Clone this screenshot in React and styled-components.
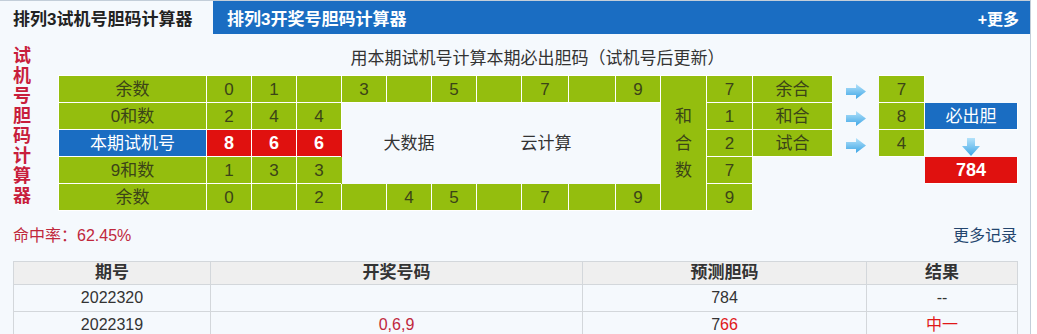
import React from "react";
import styled, { createGlobalStyle } from "styled-components";

const GlobalStyle = createGlobalStyle`
  body {
    margin: 0;
    background: #ffffff;
    font-family: "Liberation Sans", "Noto Sans CJK SC", sans-serif;
    color: #333333;
  }
`;

const Panel = styled.div`
  width: 1030px;
  height: 334px;
  overflow: hidden;
  background-color: #f5f9fd;
  border-top: 1px solid #c3ced9;
  border-right: 1px solid #c3ced9;
`;

const TabBar = styled.div`
  display: flex;
  align-items: center;
  height: 33px;
  background-color: #1a6dc2;
`;

const Tab = styled.div`
  height: 100%;
  display: flex;
  align-items: center;
  padding: 0 ${props => (props.$active ? "13px" : "14px")};
  width: ${props => (props.$active ? "187px" : "auto")};
  background-color: ${props => (props.$active ? "#f5f9fd" : "transparent")};
  color: ${props => (props.$active ? "#222222" : "#ffffff")};
  font-size: 17px;
  font-weight: 700;
`;

const MoreLink = styled.a`
  margin-left: auto;
  padding-right: 11px;
  color: #ffffff;
  font-size: 16px;
  font-weight: 700;
  text-decoration: none;
`;

const Calculator = styled.div`
  display: flex;
  padding-left: 13px;
`;

const SideLabel = styled.div`
  width: 45px;
  padding-top: 12px;
  color: #c81e3c;
  font-size: 18px;
  font-weight: 700;
  line-height: 20px;

  span {
    display: block;
  }
`;

const Main = styled.div`
  width: 959px;
`;

const Title = styled.div`
  margin: 13px 0 4px;
  line-height: 24px;
  font-size: 17px;
  text-align: center;
  color: #333333;
`;

const Grid = styled.table`
  width: 959px;
  table-layout: fixed;
  border-collapse: collapse;
  font-size: 17px;

  tr {
    height: 27px;
  }
`;

const toneColors = {
  green: "#94be0e",
  blue: "#1a6dc2",
  red: "#e0110f",
  none: "transparent"
};

const Cell = styled.td`
  padding: 0;
  border: 1px solid ${props => (props.$tone === "none" ? "transparent" : "#ffffff")};
  background-color: ${props => toneColors[props.$tone || "green"]};
  color: ${props =>
    props.$tone === "blue" || props.$tone === "red" ? "#ffffff" : "#3b4418"};
  font-weight: ${props => (props.$tone === "red" ? 700 : 400)};
  font-size: ${props => (props.$tone === "red" ? "18px" : "17px")};
  text-align: center;
  vertical-align: middle;
  line-height: 25px;
  white-space: nowrap;
`;

const PlainText = styled.span`
  color: #333333;
`;

const StackedText = styled.div`
  line-height: 27px;

  span {
    display: block;
  }
`;

const ArrowSVG = styled.svg`
  display: block;
  margin: ${props => props.$margin};
`;

const RightArrow = () => (
  <ArrowSVG $margin="5px auto 0" width="20" height="15" viewBox="0 0 20 15">
    <defs>
      <linearGradient id="arrowRight" x1="0" y1="0" x2="0" y2="1">
        <stop offset="0" stopColor="#b4e2fa" />
        <stop offset="1" stopColor="#3ea6e6" />
      </linearGradient>
    </defs>
    <path d="M0 4h10V0l10 7.5L10 15v-4H0z" fill="url(#arrowRight)" />
  </ArrowSVG>
);

const DownArrow = () => (
  <ArrowSVG $margin="8px auto 0" width="18" height="18" viewBox="0 0 18 18">
    <defs>
      <linearGradient id="arrowDown" x1="0" y1="0" x2="0" y2="1">
        <stop offset="0" stopColor="#b4e2fa" />
        <stop offset="1" stopColor="#3ea6e6" />
      </linearGradient>
    </defs>
    <path d="M5 0h8v8h5L9 18 0 8h5z" fill="url(#arrowDown)" />
  </ArrowSVG>
);

const RateBar = styled.div`
  display: flex;
  justify-content: space-between;
  margin-top: 13px;
  padding: 0 13px;
  line-height: 24px;
  font-size: 16px;
`;

const Rate = styled.span`
  color: #c0283c;
`;

const RecordsLink = styled.a`
  color: #23456e;
  text-decoration: none;
`;

const Records = styled.table`
  width: 1004px;
  margin: 13px 0 0 13px;
  table-layout: fixed;
  border-collapse: collapse;
  font-size: 16px;

  th {
    height: 22px;
    padding: 0;
    background-color: #efefef;
    border: 1px solid #d3d7db;
    font-size: 17px;
    font-weight: 700;
    color: #333333;
    line-height: 20px;
  }

  td {
    height: 26px;
    padding: 0;
    border: 1px solid #d3d7db;
    text-align: center;
    color: #333333;
    line-height: 24px;
  }
`;

const Hit = styled.span`
  color: ${props => (props.$dark ? "#c0283c" : "#e01818")};
`;

const calcWidths = [148, 45, 45, 45, 45, 45, 45, 45, 47, 47, 45, 46, 46, 80, 46, 46, 93];
const recordWidths = [197, 372, 284, 151];

const firstRow = ["0", "1", "", "3", "", "5", "", "7", "", "9"];
const lastRow = ["0", "", "2", "", "4", "5", "", "7", "", "9"];

const records = [
  { issue: "2022320", draw: "", guess: <>784</>, result: <>--</> },
  {
    issue: "2022319",
    draw: <Hit $dark>0,6,9</Hit>,
    guess: (
      <>
        7<Hit>66</Hit>
      </>
    ),
    result: <Hit>中一</Hit>
  }
];

const Stack = ({ text }) => (
  <>
    {text.split("").map((ch, i) => (
      <span key={i}>{ch}</span>
    ))}
  </>
);

export default function App() {
  return (
    <>
      <GlobalStyle />
      <Panel>
        <TabBar>
          <Tab $active>排列3试机号胆码计算器</Tab>
          <Tab>排列3开奖号胆码计算器</Tab>
          <MoreLink href="#">+更多</MoreLink>
        </TabBar>

        <Calculator>
          <SideLabel>
            <Stack text="试机号胆码计算器" />
          </SideLabel>
          <Main>
            <Title>用本期试机号计算本期必出胆码（试机号后更新）</Title>
            <Grid>
              <colgroup>
                {calcWidths.map((w, i) => (
                  <col key={i} style={{ width: w }} />
                ))}
              </colgroup>
              <tbody>
                <tr>
                  <Cell>余数</Cell>
                  {firstRow.map((n, i) => (
                    <Cell key={i}>{n}</Cell>
                  ))}
                  <Cell rowSpan={5}>
                    <StackedText>
                      <Stack text="和合数" />
                    </StackedText>
                  </Cell>
                  <Cell>7</Cell>
                  <Cell>余合</Cell>
                  <Cell $tone="none">
                    <RightArrow />
                  </Cell>
                  <Cell>7</Cell>
                  <Cell $tone="none" />
                </tr>
                <tr>
                  <Cell>0和数</Cell>
                  <Cell>2</Cell>
                  <Cell>4</Cell>
                  <Cell>4</Cell>
                  <Cell $tone="none" colSpan={3} rowSpan={3}>
                    <PlainText>大数据</PlainText>
                  </Cell>
                  <Cell $tone="none" colSpan={3} rowSpan={3}>
                    <PlainText>云计算</PlainText>
                  </Cell>
                  <Cell $tone="none" rowSpan={3} />
                  <Cell>1</Cell>
                  <Cell>和合</Cell>
                  <Cell $tone="none">
                    <RightArrow />
                  </Cell>
                  <Cell>8</Cell>
                  <Cell $tone="blue">必出胆</Cell>
                </tr>
                <tr>
                  <Cell $tone="blue">本期试机号</Cell>
                  <Cell $tone="red">8</Cell>
                  <Cell $tone="red">6</Cell>
                  <Cell $tone="red">6</Cell>
                  <Cell>2</Cell>
                  <Cell>试合</Cell>
                  <Cell $tone="none">
                    <RightArrow />
                  </Cell>
                  <Cell>4</Cell>
                  <Cell $tone="none">
                    <DownArrow />
                  </Cell>
                </tr>
                <tr>
                  <Cell>9和数</Cell>
                  <Cell>1</Cell>
                  <Cell>3</Cell>
                  <Cell>3</Cell>
                  <Cell>7</Cell>
                  <Cell $tone="none" colSpan={3} />
                  <Cell $tone="red">784</Cell>
                </tr>
                <tr>
                  <Cell>余数</Cell>
                  {lastRow.map((n, i) => (
                    <Cell key={i}>{n}</Cell>
                  ))}
                  <Cell>9</Cell>
                  <Cell $tone="none" colSpan={4} />
                </tr>
              </tbody>
            </Grid>
          </Main>
        </Calculator>

        <RateBar>
          <Rate>命中率：62.45%</Rate>
          <RecordsLink href="#">更多记录</RecordsLink>
        </RateBar>

        <Records>
          <colgroup>
            {recordWidths.map((w, i) => (
              <col key={i} style={{ width: w }} />
            ))}
          </colgroup>
          <thead>
            <tr>
              <th>期号</th>
              <th>开奖号码</th>
              <th>预测胆码</th>
              <th>结果</th>
            </tr>
          </thead>
          <tbody>
            {records.map(r => (
              <tr key={r.issue}>
                <td>{r.issue}</td>
                <td>{r.draw}</td>
                <td>{r.guess}</td>
                <td>{r.result}</td>
              </tr>
            ))}
          </tbody>
        </Records>
      </Panel>
    </>
  );
}
